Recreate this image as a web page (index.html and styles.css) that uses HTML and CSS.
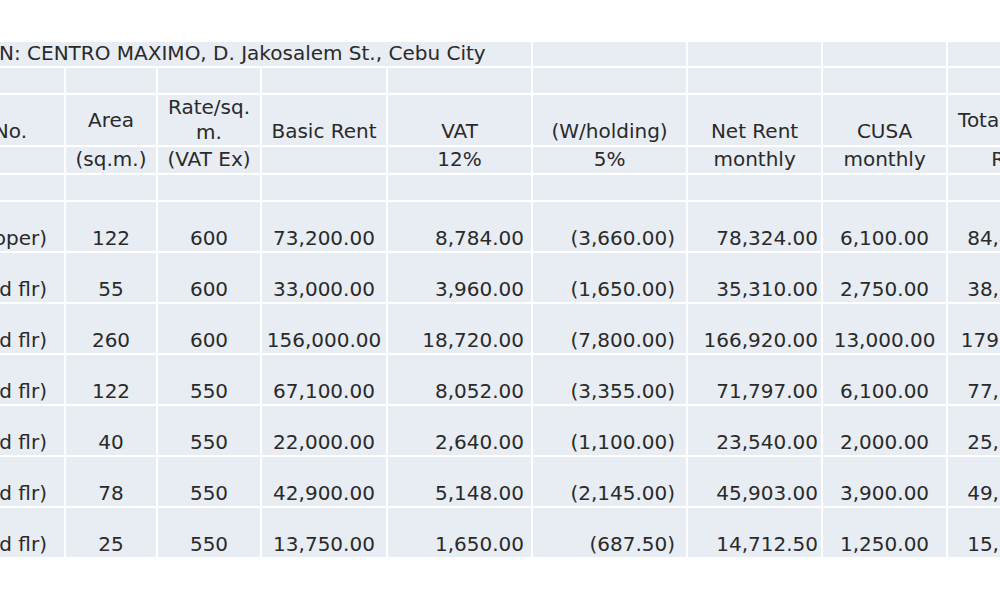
FILE: index.html
```html
<!DOCTYPE html>
<html>
<head>
<meta charset="utf-8">
<link rel="stylesheet" href="styles.css">
</head>
<body>
<div class="page">
  <table class="sheet">
    <colgroup>
      <col class="c0"><col class="c1"><col class="c2"><col class="c3"><col class="c4"><col class="c5"><col class="c6"><col class="c7"><col class="c8">
    </colgroup>
    <tr class="r-title">
      <td colspan="5" class="title"><div class="title-text">N: CENTRO MAXIMO, D. Jakosalem St., Cebu City</div></td>
      <td></td><td></td><td></td><td></td>
    </tr>
    <tr class="r-blank"><td></td><td></td><td></td><td></td><td></td><td></td><td></td><td></td><td></td></tr>
    <tr class="r-head-a">
      <td class="lbl head-lbl"><div class="clip">Unit No.</div></td>
      <td class="ctr mid">Area</td>
      <td class="ctr tall">Rate/sq.<br>m.</td>
      <td class="ctr">Basic Rent</td>
      <td class="ctr">VAT</td>
      <td class="ctr">(W/holding)</td>
      <td class="ctr">Net Rent</td>
      <td class="ctr">CUSA</td>
      <td class="ctr mid total-head">Total Monthly</td>
    </tr>
    <tr class="r-head-b">
      <td></td>
      <td class="ctr sub">(sq.m.)</td>
      <td class="ctr sub">(VAT Ex)</td>
      <td></td>
      <td class="ctr sub">12%</td>
      <td class="ctr sub">5%</td>
      <td class="ctr sub">monthly</td>
      <td class="ctr sub">monthly</td>
      <td class="ctr sub total-head">Rental</td>
    </tr>
    <tr class="r-blank"><td></td><td></td><td></td><td></td><td></td><td></td><td></td><td></td><td></td></tr>
    <tr class="r-data">
      <td class="lbl"><div class="clip">(Developer)</div></td>
      <td class="ctr">122</td><td class="ctr">600</td><td class="ctr">73,200.00</td>
      <td class="num vat">8,784.00</td><td class="num wh">(3,660.00)</td><td class="num net">78,324.00</td>
      <td class="ctr">6,100.00</td><td class="ctr">84,424.00</td>
    </tr>
    <tr class="r-data">
      <td class="lbl"><div class="clip">(2nd flr)</div></td>
      <td class="ctr">55</td><td class="ctr">600</td><td class="ctr">33,000.00</td>
      <td class="num vat">3,960.00</td><td class="num wh">(1,650.00)</td><td class="num net">35,310.00</td>
      <td class="ctr">2,750.00</td><td class="ctr">38,060.00</td>
    </tr>
    <tr class="r-data">
      <td class="lbl"><div class="clip">(2nd flr)</div></td>
      <td class="ctr">260</td><td class="ctr">600</td><td class="ctr">156,000.00</td>
      <td class="num vat">18,720.00</td><td class="num wh">(7,800.00)</td><td class="num net">166,920.00</td>
      <td class="ctr">13,000.00</td><td class="ctr">179,920.00</td>
    </tr>
    <tr class="r-data">
      <td class="lbl"><div class="clip">(3rd flr)</div></td>
      <td class="ctr">122</td><td class="ctr">550</td><td class="ctr">67,100.00</td>
      <td class="num vat">8,052.00</td><td class="num wh">(3,355.00)</td><td class="num net">71,797.00</td>
      <td class="ctr">6,100.00</td><td class="ctr">77,897.00</td>
    </tr>
    <tr class="r-data">
      <td class="lbl"><div class="clip">(3rd flr)</div></td>
      <td class="ctr">40</td><td class="ctr">550</td><td class="ctr">22,000.00</td>
      <td class="num vat">2,640.00</td><td class="num wh">(1,100.00)</td><td class="num net">23,540.00</td>
      <td class="ctr">2,000.00</td><td class="ctr">25,540.00</td>
    </tr>
    <tr class="r-data">
      <td class="lbl"><div class="clip">(3rd flr)</div></td>
      <td class="ctr">78</td><td class="ctr">550</td><td class="ctr">42,900.00</td>
      <td class="num vat">5,148.00</td><td class="num wh">(2,145.00)</td><td class="num net">45,903.00</td>
      <td class="ctr">3,900.00</td><td class="ctr">49,803.00</td>
    </tr>
    <tr class="r-data">
      <td class="lbl"><div class="clip">(3rd flr)</div></td>
      <td class="ctr">25</td><td class="ctr">550</td><td class="ctr">13,750.00</td>
      <td class="num vat">1,650.00</td><td class="num wh">(687.50)</td><td class="num net">14,712.50</td>
      <td class="ctr">1,250.00</td><td class="ctr">15,962.50</td>
    </tr>
  </table>
</div>
</body>
</html>
```
FILE: styles.css
```css
html, body {
  margin: 0;
  padding: 0;
  background: #ffffff;
}

.page {
  width: 1000px;
  height: 589px;
  overflow: hidden;
  padding-top: 40px;
  box-sizing: border-box;
}

.sheet {
  margin-left: -2px;
  border-collapse: separate;
  border-spacing: 2px;
  table-layout: fixed;
  width: 1092px;
  font-family: "DejaVu Sans", Verdana, sans-serif;
  font-size: 20px;
  color: #2a2a2a;
}

.c0 { width: 64px; }
.c1 { width: 90px; }
.c2 { width: 102px; }
.c3 { width: 124px; }
.c4 { width: 143px; }
.c5 { width: 153px; }
.c6 { width: 133px; }
.c7 { width: 123px; }
.c8 { width: 140px; }

.sheet td {
  background: #e8ecf3;
  padding: 0 0 2px 0;
  line-height: 22px;
  vertical-align: bottom;
  white-space: nowrap;
  overflow: hidden;
}

.r-title { height: 23px; }
.r-blank { height: 25px; }
.r-head-a { height: 50px; }
.r-head-b { height: 26px; }
.r-data { height: 49px; }

.r-head-a td { padding-bottom: 3px; }

.title-text {
  text-indent: -1px;
  overflow: hidden;
  white-space: nowrap;
}

.ctr { text-align: center; }
.mid { vertical-align: middle !important; padding-bottom: 0 !important; }
.sheet td.sub { vertical-align: middle; padding-bottom: 3px; }
.sheet td.tall { line-height: 25px; padding-bottom: 0; }
.sheet td.total-head { padding-left: 10px; }

.num { text-align: right; }
.sheet td.vat { padding-right: 7px; }
.sheet td.wh { padding-right: 11px; }
.sheet td.net { padding-right: 3px; }

.clip {
  display: flex;
  justify-content: flex-end;
  overflow: hidden;
  white-space: nowrap;
  padding-right: 17px;
}

.head-lbl .clip { padding-right: 37px; }
```
